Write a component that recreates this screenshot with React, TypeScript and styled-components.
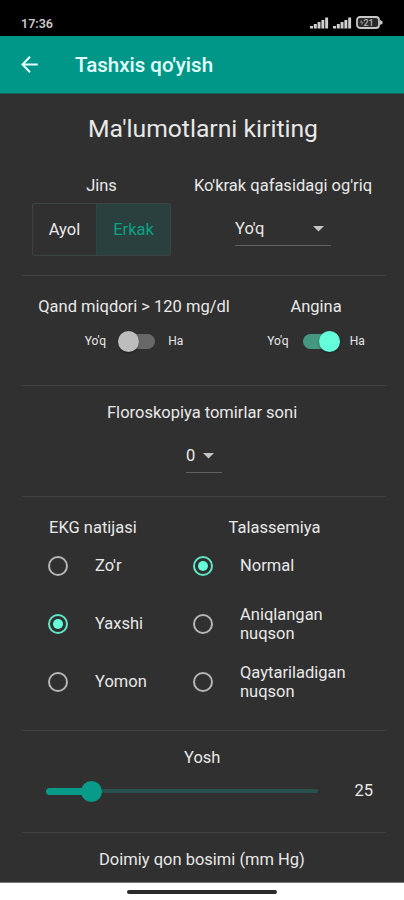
import React from 'react';
import styled, { createGlobalStyle } from 'styled-components';

const Global = createGlobalStyle`
  * { box-sizing: border-box; }
  body { margin: 0; background: #303030; }
`;

const Screen = styled.div`
  width: 404px;
  height: 900px;
  overflow: hidden;
  display: flex;
  flex-direction: column;
  background: #303030;
  color: #e8e8e8;
  font: 400 16.5px/20px Roboto, sans-serif;
`;

const StatusBar = styled.header`
  height: 36px;
  flex: none;
  background: #000;
  display: flex;
  justify-content: space-between;
  align-items: flex-start;
  padding: 15px 21px 0 21px;
`;

const Clock = styled.span`
  font: 600 12.5px/17px Roboto, sans-serif;
  color: #c9c9c9;
`;

const StatusIcons = styled.div`
  display: flex;
  gap: 4px;
  padding-top: 1px;
`;

const AppBar = styled.div`
  height: 58px;
  flex: none;
  display: flex;
  align-items: center;
  gap: 36px;
  padding-left: 21px;
  background: #019788;
  border-bottom: 1px solid #176159;
`;

const AppTitle = styled.h1`
  margin: 0;
  font: 500 20.5px/24px Roboto, sans-serif;
  color: #e3fffb;
`;

const Body = styled.main`
  height: 789px;
  flex: none;
  overflow: hidden;
  padding: 0 18px 0 22px;
  border-bottom: 1px solid #777;
`;

const Heading = styled.h2`
  margin: 0 0 30px;
  padding: 20px 2px 0 0;
  text-align: center;
  font: 400 24.7px/30px Roboto, sans-serif;
`;

const Section = styled.section<{ $h: number; $top?: number }>`
  height: ${p => p.$h}px;
  padding-top: ${p => p.$top ?? 0}px;
  border-bottom: 1px solid #424242;
  display: flex;
`;

const Column = styled.div<{ $w?: number; $ml?: number }>`
  width: ${p => (p.$w ? `${p.$w}px` : '100%')};
  margin-left: ${p => p.$ml ?? 0}px;
  flex: none;
  display: flex;
  flex-direction: column;
  align-items: center;
`;

const Label = styled.div<{ $start?: number }>`
  white-space: nowrap;
  align-self: ${p => (p.$start === undefined ? 'center' : 'flex-start')};
  margin-left: ${p => p.$start ?? 0}px;
`;

const ToggleGroup = styled.div`
  display: flex;
  width: 139px;
  height: 53px;
  margin-top: 7px;
  border: 1px solid #3c4341;
  border-radius: 2px;
`;

const ToggleButton = styled.button<{ $on?: boolean }>`
  width: ${p => (p.$on ? 74 : 63)}px;
  padding: 0;
  border: 0;
  border-left: ${p => (p.$on ? '1px solid #30453f' : '0')};
  background: ${p => (p.$on ? '#29403e' : 'transparent')};
  color: ${p => (p.$on ? '#0ba283' : '#e8e8e8')};
  font: inherit;
`;

const Dropdown = styled.div<{ $w: number; $right: number }>`
  width: ${p => p.$w}px;
  height: 34px;
  margin-top: 16px;
  padding: 1px ${p => p.$right}px 0 0;
  border-bottom: 1px solid #606060;
  display: flex;
  align-items: center;
  justify-content: space-between;
`;

const SwitchRow = styled.div`
  display: flex;
  align-items: center;
  margin-top: 14px;
  font-size: 12px;
`;

const Track = styled.span<{ $on?: boolean }>`
  width: 37px;
  height: 15px;
  margin: ${p => (p.$on ? '0 10px 0 14px' : '0 13px 0 12px')};
  border-radius: 8px;
  background: ${p => (p.$on ? '#459780' : '#686868')};
  display: flex;
  align-items: center;
  justify-content: ${p => (p.$on ? 'flex-end' : 'flex-start')};
`;

const Thumb = styled.span<{ $on?: boolean }>`
  width: 21px;
  height: 21px;
  flex: none;
  border-radius: 50%;
  background: ${p => (p.$on ? '#64ffda' : '#bdbdbd')};
  box-shadow: 0 1px 2px #0006;
`;

const RadioRow = styled.div`
  width: 100%;
  height: 58px;
  display: flex;
  align-items: center;
  gap: 27px;
  line-height: 19.5px;
`;

const RadioList = styled.div`
  width: 100%;
  margin-top: -1px;
`;

const RadioRing = styled.span<{ $on?: boolean }>`
  width: 20px;
  height: 20px;
  flex: none;
  border: 2px solid ${p => (p.$on ? '#62e5c6' : '#b5b5b5')};
  border-radius: 50%;
  display: flex;
  align-items: center;
  justify-content: center;
`;

const RadioDot = styled.span`
  width: 10px;
  height: 10px;
  border-radius: 50%;
  background: #64ffda;
`;

const SliderRow = styled.div`
  width: 100%;
  height: 22px;
  margin-top: 12px;
  padding: 0 13px 0 24px;
  display: flex;
  align-items: center;
  justify-content: space-between;
`;

const Slider = styled.div`
  width: 272px;
  display: flex;
  align-items: center;
`;

const SliderFill = styled.span`
  width: 36px;
  height: 7px;
  border-radius: 4px 0 0 4px;
  background: #089b8a;
`;

const SliderKnob = styled.span`
  width: 21px;
  height: 21px;
  margin-left: -1px;
  border-radius: 50%;
  background: #089b8a;
`;

const SliderRest = styled.span`
  flex: 1;
  height: 4px;
  border-radius: 0 2px 2px 0;
  background: #29504c;
`;

const NavBar = styled.footer`
  flex: 1;
  background: #fff;
  display: flex;
  justify-content: center;
  padding-top: 7px;
`;

const NavHandle = styled.span`
  width: 150px;
  height: 4px;
  border-radius: 2px;
  background: #2b2b2b;
`;

const Signal = () => (
  <svg width="19" height="13" viewBox="0 0 19 13" fill="#cfcfcf">
    <rect x="0" y="10" width="3" height="2.5" />
    <rect x="3.8" y="8" width="3" height="4.5" />
    <rect x="7.6" y="6" width="2.9" height="6.5" />
    <rect x="11.4" y="4" width="2.9" height="8.5" />
    <rect x="15.2" y="1.5" width="2.9" height="11" />
  </svg>
);

const Battery = () => (
  <svg width="27" height="13" viewBox="0 0 27 13">
    <rect x="1" y="1" width="22" height="11" rx="3" fill="#292929" stroke="#c8c8c8" strokeWidth="1.8" />
    <path d="M24 4v5l2.5-1.2V5.2z" fill="#c8c8c8" />
    <path d="M3.5 6.5 6 3.5V6h2L5.5 9.5V7z" fill="#777" />
    <text x="7.5" y="9.8" fontSize="9" fontWeight="500" fontFamily="Roboto, sans-serif" fill="#b9b9b9">21</text>
  </svg>
);

const Caret = () => (
  <svg width="11" height="6" viewBox="0 0 11 6"><path d="M0 0h11L5.5 5.5z" fill="#c4c4c4" /></svg>
);

const BackArrow = () => (
  <svg width="18" height="18" viewBox="0 0 18 18" fill="none" stroke="#e3fffb" strokeWidth="2">
    <path d="M16.8 8.5H2M9 0.8 1.5 8.5 9 16.2" />
  </svg>
);

const Switch = ({ on }: { on?: boolean }) => (
  <SwitchRow>
    <span>Yo'q</span>
    <Track $on={on}><Thumb $on={on} /></Track>
    <span>Ha</span>
  </SwitchRow>
);

const Radio = ({ on, children }: { on?: boolean; children: React.ReactNode }) => (
  <RadioRow>
    <RadioRing $on={on}>{on && <RadioDot />}</RadioRing>
    <span>{children}</span>
  </RadioRow>
);

export default function App() {
  return (
    <>
      <Global />
      <Screen>
        <StatusBar>
          <Clock>17:36</Clock>
          <StatusIcons><Signal /><Signal /><Battery /></StatusIcons>
        </StatusBar>
        <AppBar><BackArrow /><AppTitle>Tashxis qo'yish</AppTitle></AppBar>
        <Body>
          <Heading>Ma'lumotlarni kiriting</Heading>
          <Section $h={102} $top={2}>
            <Column $w={139} $ml={10}>
              <Label>Jins</Label>
              <ToggleGroup>
                <ToggleButton>Ayol</ToggleButton>
                <ToggleButton $on>Erkak</ToggleButton>
              </ToggleGroup>
            </Column>
            <Column $w={180} $ml={22}>
              <Label>Ko'krak qafasidagi og'riq</Label>
              <Dropdown $w={96} $right={7}><span>Yo'q</span><Caret /></Dropdown>
            </Column>
          </Section>
          <Section $h={110} $top={21}>
            <Column $w={192} $ml={16}>
              <Label>Qand miqdori &gt; 120 mg/dl</Label>
              <Switch />
            </Column>
            <Column $w={100} $ml={36}>
              <Label>Angina</Label>
              <Switch on />
            </Column>
          </Section>
          <Section $h={111} $top={17}>
            <Column>
              <Label $start={85}>Floroskopiya tomirlar soni</Label>
              <Dropdown $w={36} $right={8}><span>0</span><Caret /></Dropdown>
            </Column>
          </Section>
          <Section $h={234} $top={21}>
            <Column $w={145} $ml={26}>
              <Label $start={1}>EKG natijasi</Label>
              <RadioList><Radio>Zo'r</Radio><Radio on>Yaxshi</Radio><Radio>Yomon</Radio></RadioList>
            </Column>
            <Column $w={163}>
              <Label>Talassemiya</Label>
              <RadioList>
                <Radio on>Normal</Radio>
                <Radio>Aniqlangan<br />nuqson</Radio>
                <Radio>Qaytariladigan<br />nuqson</Radio>
              </RadioList>
            </Column>
          </Section>
          <Section $h={102} $top={17}>
            <Column>
              <Label $start={162}>Yosh</Label>
              <SliderRow>
                <Slider><SliderFill /><SliderKnob /><SliderRest /></Slider>
                <span>25</span>
              </SliderRow>
            </Column>
          </Section>
          <Section $h={60} $top={17}>
            <Column><Label $start={77}>Doimiy qon bosimi (mm Hg)</Label></Column>
          </Section>
        </Body>
        <NavBar><NavHandle /></NavBar>
      </Screen>
    </>
  );
}
